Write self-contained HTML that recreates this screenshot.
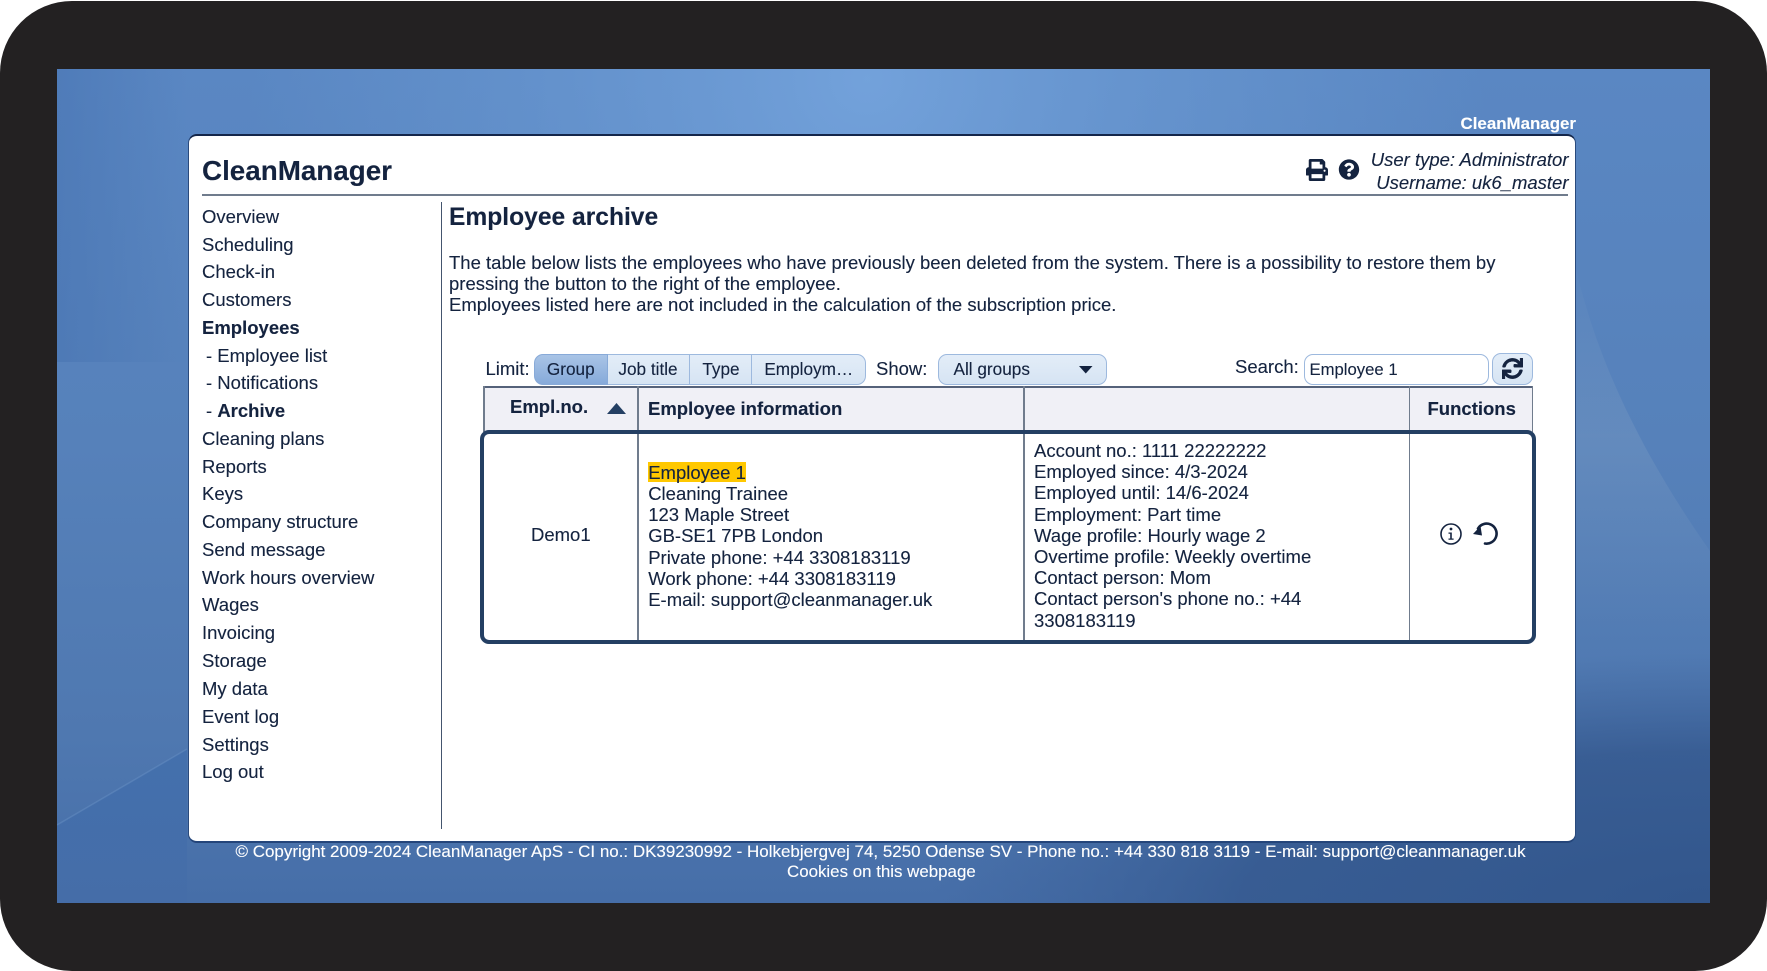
<!DOCTYPE html>
<html lang="en"><head><meta charset="utf-8"><title>CleanManager - Employee archive</title>
<style>
html,body{margin:0;padding:0;background:#fff}
body{width:1767px;height:971px;position:relative;overflow:hidden;font-family:"Liberation Sans",Arial,sans-serif;color:#14233f;font-size:18.5px;-webkit-text-stroke:.12px}
.a{position:absolute;white-space:nowrap;line-height:22px}
.b{font-weight:bold}
.bezel{position:absolute;left:0;top:1px;width:1767px;height:970px;background:#232122;border-radius:72px}
.bg{position:absolute;left:57px;top:69px;width:1653px;height:834px}
.card{position:absolute;left:187.5px;top:134px;width:1386px;height:705px;background:#fff;border:1px solid #2a4a7c;border-top:2px solid #14264a;border-bottom:2px solid #24457a;border-radius:9px}
.tab{position:absolute;top:354px;height:31px;line-height:29px;box-sizing:border-box;text-align:center;border:1px solid #9db9de;background:linear-gradient(#e3edf8,#d6e4f3);color:#14233f;font-size:17.2px}
.th{position:absolute;background:#f0f0f6}
.v{position:absolute;width:1.6px;background:#707c8d}
</style></head>
<body>
<div class="bezel"></div>
<svg class="bg" viewBox="0 0 1653 834" width="1653" height="834">
<defs>
<linearGradient id="base" x1="0" y1="0" x2="0" y2="1"><stop offset="0" stop-color="#5a87c3"/><stop offset=".45" stop-color="#5681ba"/><stop offset=".8" stop-color="#4f78b0"/><stop offset="1" stop-color="#466ea8"/></linearGradient>
<radialGradient id="glow" cx="810" cy="10" r="620" gradientUnits="userSpaceOnUse"><stop offset="0" stop-color="#74a3dc" stop-opacity=".95"/><stop offset=".6" stop-color="#6b9ad3" stop-opacity=".45"/><stop offset="1" stop-color="#6b9ad3" stop-opacity="0"/></radialGradient>
<linearGradient id="edgeL" x1="0" y1="0" x2="1" y2="0"><stop offset="0" stop-color="#4874b2" stop-opacity=".6"/><stop offset="1" stop-color="#4874b2" stop-opacity="0"/></linearGradient>
<linearGradient id="rLight" gradientUnits="userSpaceOnUse" x1="0" y1="200" x2="0" y2="570"><stop offset="0" stop-color="#8aa6c6" stop-opacity=".04"/><stop offset=".45" stop-color="#8aa6c6" stop-opacity=".26"/><stop offset="1" stop-color="#8aa6c6" stop-opacity="0"/></linearGradient>
<linearGradient id="dark" x1="0" y1="0" x2="0" y2="1"><stop offset="0" stop-color="#4470ad"/><stop offset="1" stop-color="#456da8"/></linearGradient>
<radialGradient id="darkB" gradientUnits="userSpaceOnUse" cx="0" cy="0" r="1" gradientTransform="translate(1653 834) scale(780 250)"><stop offset="0" stop-color="#32568c" stop-opacity="1"/><stop offset=".6" stop-color="#35598f" stop-opacity=".85"/><stop offset="1" stop-color="#3a5f98" stop-opacity="0"/></radialGradient>
</defs>
<rect width="1653" height="834" fill="url(#base)"/>
<rect width="1653" height="834" fill="url(#glow)"/>
<rect width="130" height="293" fill="url(#edgeL)"/>
<path d="M1518 194C1530 250 1560 350 1653 482V570H1518Z" fill="url(#rLight)"/>
<path d="M0 756L130 680V834H0Z" fill="url(#dark)"/>
<path d="M0 756L130 680" stroke="#6f97c8" stroke-width="1.5" fill="none" opacity=".4"/>
<rect width="1653" height="834" fill="url(#darkB)"/>
</svg>

<div class="a b" style="right:191px;top:113px;color:#fff;font-size:16.9px">CleanManager</div>
<div class="card"></div>

<div class="a b" style="left:202px;top:155px;font-size:27.8px;line-height:32px">CleanManager</div>
<div style="position:absolute;left:202px;top:194px;width:1366px;height:2px;background:#707c8d"></div>

<svg style="position:absolute;left:1304.5px;top:158.5px" width="24" height="22" viewBox="0 0 512 512"><path fill="#14233f" d="M448 192V77.25c0-8.49-3.37-16.62-9.37-22.63L393.37 9.37c-6-6-14.14-9.37-22.63-9.37H96C78.33 0 64 14.33 64 32v160c-35.35 0-64 28.65-64 64v112c0 8.84 7.16 16 16 16h48v96c0 17.67 14.33 32 32 32h320c17.67 0 32-14.33 32-32v-96h48c8.84 0 16-7.16 16-16V256c0-35.35-28.65-64-64-64zm-64 256H128v-96h256v96zm0-224H128V64h192v48c0 8.84 7.16 16 16 16h48v96zm48 72c-13.25 0-24-10.75-24-24 0-13.26 10.75-24 24-24s24 10.74 24 24c0 13.25-10.75 24-24 24z"/></svg>
<svg style="position:absolute;left:1338px;top:159px" width="22" height="21" viewBox="0 0 512 512"><path fill="#14233f" d="M504 256c0 136.997-111.043 248-248 248S8 392.997 8 256C8 119.083 119.043 8 256 8s248 111.083 248 248zM262.655 90c-54.497 0-89.255 22.957-116.549 63.758-3.536 5.286-2.353 12.415 2.715 16.258l34.699 26.31c5.205 3.947 12.621 3.008 16.665-2.122 17.864-22.658 30.113-35.797 57.303-35.797 20.429 0 45.698 13.148 45.698 32.958 0 14.976-12.363 22.667-32.534 33.976C247.128 238.528 216 254.941 216 296v4c0 6.627 5.373 12 12 12h56c6.627 0 12-5.373 12-12v-1.333c0-28.462 83.186-29.647 83.186-106.667 0-58.002-60.165-102-116.531-102zM256 338c-25.365 0-46 20.635-46 46 0 25.364 20.635 46 46 46s46-20.636 46-46c0-25.365-20.635-46-46-46z"/></svg>
<div class="a" style="right:198.5px;top:149px;font-style:italic;text-align:right">User type: Administrator</div>
<div class="a" style="right:198.5px;top:172px;font-style:italic;text-align:right">Username: uk6_master</div>

<div class="a" style="left:202px;top:205.7px">Overview</div>
<div class="a" style="left:202px;top:233.5px">Scheduling</div>
<div class="a" style="left:202px;top:261px">Check-in</div>
<div class="a" style="left:202px;top:289px">Customers</div>
<div class="a b" style="left:202px;top:317px">Employees</div>
<div class="a" style="left:206px;top:344.7px">- Employee list</div>
<div class="a" style="left:206px;top:372px">- Notifications</div>
<div class="a" style="left:206px;top:400px">- <b>Archive</b></div>
<div class="a" style="left:202px;top:428px">Cleaning plans</div>
<div class="a" style="left:202px;top:456px">Reports</div>
<div class="a" style="left:202px;top:483px">Keys</div>
<div class="a" style="left:202px;top:511px">Company structure</div>
<div class="a" style="left:202px;top:539px">Send message</div>
<div class="a" style="left:202px;top:567px">Work hours overview</div>
<div class="a" style="left:202px;top:594px">Wages</div>
<div class="a" style="left:202px;top:622px">Invoicing</div>
<div class="a" style="left:202px;top:650px">Storage</div>
<div class="a" style="left:202px;top:678px">My data</div>
<div class="a" style="left:202px;top:706px">Event log</div>
<div class="a" style="left:202px;top:734px">Settings</div>
<div class="a" style="left:202px;top:761px">Log out</div>

<div style="position:absolute;left:440.5px;top:202px;width:1.5px;height:627px;background:#44556e"></div>

<div class="a b" style="left:449px;top:203.6px;font-size:24.6px;line-height:28px">Employee archive</div>
<div class="a" style="left:449px;top:251.8px;line-height:21.2px">The table below lists the employees who have previously been deleted from the system. There is a possibility to restore them by<br>pressing the button to the right of the employee.<br>Employees listed here are not included in the calculation of the subscription price.</div>

<div class="a" style="left:485.5px;top:358px">Limit:</div>
<div class="tab" style="left:534px;width:73.5px;border-radius:9px 0 0 9px;background:linear-gradient(#a9c4e6,#86aada);border-color:#88aad8">Group</div>
<div class="tab" style="left:607.5px;width:82px;border-left:0">Job title</div>
<div class="tab" style="left:689.5px;width:62px;border-left:0;padding-left:2px">Type</div>
<div class="tab" style="left:751.5px;width:114.5px;border-left:0;border-radius:0 9px 9px 0;padding-left:1px">Employm…</div>
<div class="a" style="left:876px;top:358px">Show:</div>
<div class="tab" style="left:937.5px;width:169px;border-radius:9px;text-align:left;padding-left:15px">All groups</div>
<svg style="position:absolute;left:1079px;top:366px" width="14" height="8"><path d="M0 0H13.5L6.75 7.5Z" fill="#14233f"/></svg>
<div class="a" style="left:1235px;top:356px">Search:</div>
<div class="tab" style="left:1303.5px;width:185px;border-radius:9px;background:#fff;text-align:left;padding-left:5px;font-size:16.7px">Employee 1</div>
<div class="tab" style="left:1492px;top:353px;width:41px;height:32px;border-radius:9px"></div>
<svg style="position:absolute;left:1502px;top:358px" width="21" height="21" viewBox="0 0 512 512"><path fill="#14233f" stroke="#14233f" stroke-width="12" d="M440.65 12.57l4 82.77A247.16 247.16 0 0 0 255.83 8C134.73 8 33.91 94.92 12.29 209.82A12 12 0 0 0 24.09 224h49.05a12 12 0 0 0 11.67-9.26 175.91 175.91 0 0 1 317-56.94l-101.46-4.86a12 12 0 0 0-12.57 12v47.41a12 12 0 0 0 12 12H500a12 12 0 0 0 12-12V12a12 12 0 0 0-12-12h-47.37a12 12 0 0 0-11.98 12.57zM255.83 432a175.61 175.61 0 0 1-146-77.8l101.8 4.87a12 12 0 0 0 12.57-12v-47.4a12 12 0 0 0-12-12H12a12 12 0 0 0-12 12V500a12 12 0 0 0 12 12h47.35a12 12 0 0 0 12-12.6l-4.15-82.57A247.17 247.17 0 0 0 255.83 504c121.11 0 221.93-86.92 243.55-201.82a12 12 0 0 0-11.8-14.18h-49.05a12 12 0 0 0-11.67 9.26A175.86 175.86 0 0 1 255.83 432z"/></svg>

<div class="th" style="left:483.5px;top:386px;width:1049.5px;height:46px"></div>
<div style="position:absolute;left:483.5px;top:386px;width:1049.5px;height:1.5px;background:#55627a"></div>
<div class="v" style="left:483.2px;top:386px;height:46px"></div>
<div class="v" style="left:1531.7px;top:386px;height:46px"></div>
<div class="v" style="left:637px;top:386px;height:258px"></div>
<div class="v" style="left:1023px;top:386px;height:258px"></div>
<div class="v" style="left:1408.5px;top:386px;height:258px"></div>
<div style="position:absolute;left:480px;top:430px;width:1056px;height:214px;box-sizing:border-box;border:4.5px solid #243f63;border-radius:9px"></div>

<div class="a b" style="left:510px;top:396px">Empl.no.</div>
<svg style="position:absolute;left:606px;top:403px" width="21" height="12"><path d="M10.5 0L20 11H1Z" fill="#243f63"/></svg>
<div class="a b" style="left:648px;top:398px">Employee information</div>
<div class="a b" style="left:1427.5px;top:398px">Functions</div>

<div class="a" style="left:531px;top:524px">Demo1</div>
<div style="position:absolute;left:648px;top:462px;width:98px;height:20px;background:#ffc800"></div>
<div class="a" style="left:648.2px;top:461.7px;line-height:21.2px">Employee 1<br>Cleaning Trainee<br>123 Maple Street<br>GB-SE1 7PB London<br>Private phone: +44 3308183119<br>Work phone: +44 3308183119<br>E-mail: support@cleanmanager.uk</div>
<div class="a" style="left:1034px;top:440px;line-height:21.2px">Account no.: 1111 22222222<br>Employed since: 4/3-2024<br>Employed until: 14/6-2024<br>Employment: Part time<br>Wage profile: Hourly wage 2<br>Overtime profile: Weekly overtime<br>Contact person: Mom<br>Contact person's phone no.: +44<br>3308183119</div>

<svg style="position:absolute;left:1439px;top:522px" width="24" height="24" viewBox="0 0 24 24"><circle cx="12" cy="12" r="10" fill="none" stroke="#14233f" stroke-width="1.6"/><circle cx="12" cy="7" r="1.4" fill="#14233f"/><path d="M9.5 10.5H12.8V16.5H14.6V17.8H9.5V16.5H11.2V11.8H9.5Z" fill="#14233f"/></svg>
<svg style="position:absolute;left:1471px;top:521px" width="28" height="26" viewBox="0 0 28 26"><path d="M7 7.5A10 10 0 1 1 14 22.5" fill="none" stroke="#14233f" stroke-width="2.6" stroke-linecap="round"/><path d="M2 13L11 14.5L9.5 5Z" fill="#14233f"/></svg>

<div class="a" style="left:235.5px;top:842px;color:#fff;font-size:16.98px;line-height:20px">© Copyright 2009-2024 CleanManager ApS - CI no.: DK39230992 - Holkebjergvej 74, 5250 Odense SV - Phone no.: +44 330 818 3119 - E-mail: support@cleanmanager.uk</div>
<div class="a" style="left:787px;top:861.5px;color:#fff;font-size:16.9px;line-height:20px">Cookies on this webpage</div>
</body></html>
